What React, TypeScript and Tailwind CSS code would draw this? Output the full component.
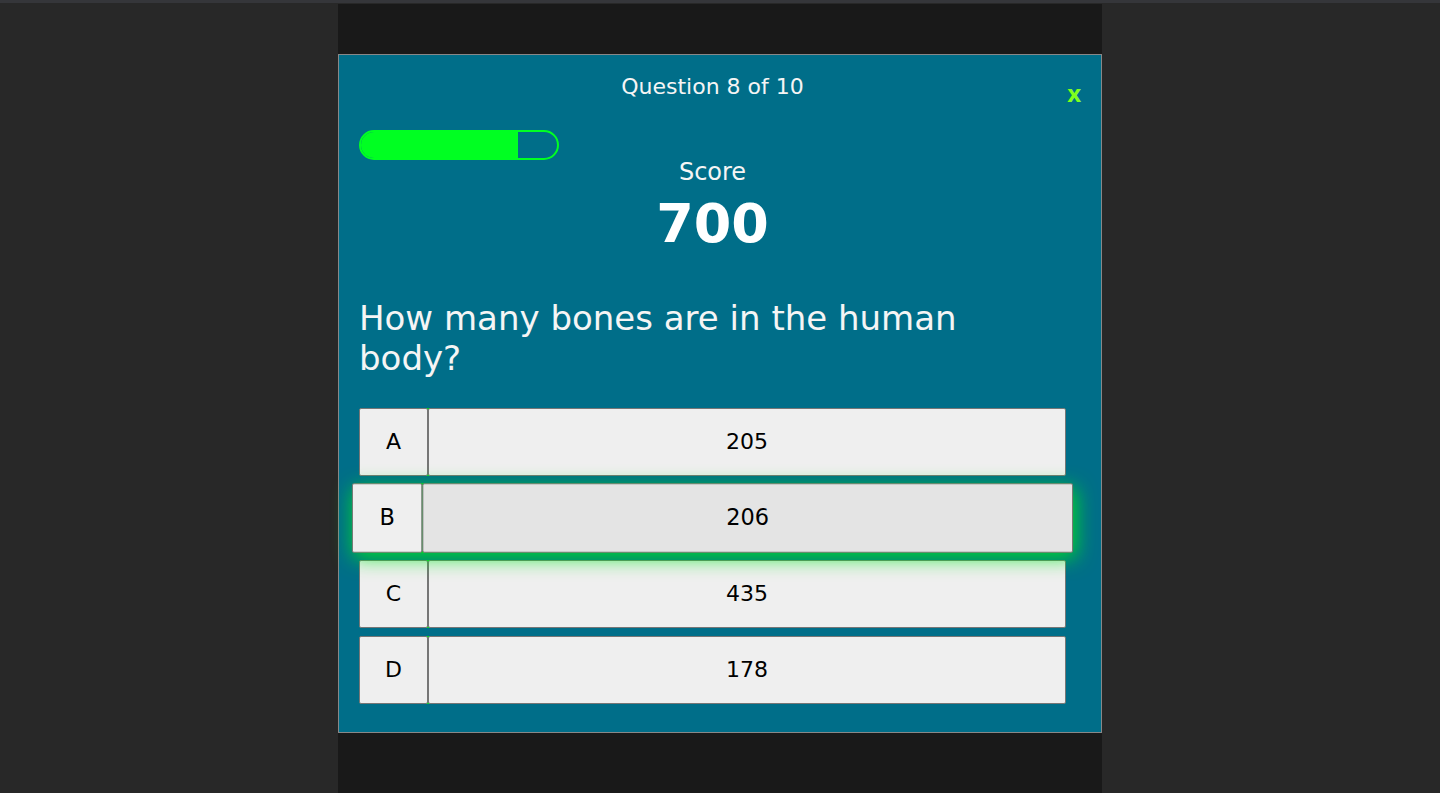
type Choice = { letter: string; text: string };

const choices: Choice[] = [
  { letter: "A", text: "205" },
  { letter: "B", text: "206" },
  { letter: "C", text: "435" },
  { letter: "D", text: "178" },
];

const highlighted = "B";

function ChoiceRow({ letter, text }: Choice) {
  const active = letter === highlighted;
  return (
    <li
      className={
        active
          ? "relative z-10 flex h-17 scale-[1.02] rounded-sm bg-[#00e01e] shadow-[2px_5px_20px_0_rgba(0,235,30,0.85)]"
          : "flex h-17 rounded-sm bg-[#00e01e]"
      }
    >
      <button
        type="button"
        aria-label={`Choice ${letter}`}
        className="w-[69px] shrink-0 rounded-xs border border-[#767676] bg-[#efefef] text-black"
      >
        {letter}
      </button>
      <button
        type="button"
        className={
          active
            ? "flex-1 rounded-xs border border-[#767676] bg-[#e4e4e4] text-black"
            : "flex-1 rounded-xs border border-[#767676] bg-[#efefef] text-black"
        }
      >
        {text}
      </button>
    </li>
  );
}

export default function App() {
  const current = 8;
  const total = 10;
  return (
    <div className="flex min-h-screen flex-col border-t-3 border-[#35363a] bg-[#282828] pt-px font-['DejaVu_Sans',sans-serif]">
      <main className="mx-auto w-[764px] max-w-full flex-1 bg-[#191919] pt-[50px]">
        <section className="relative border border-[#888888] bg-[#006e89] pt-5 pr-[35px] pb-7 pl-5 text-[22px] leading-6 text-[#f5f5f5]">
          <button
            type="button"
            aria-label="Close quiz"
            className="absolute top-5 right-5 font-['Open_Sans',sans-serif] text-[24px] leading-9 font-bold text-[#7fff1f]"
          >
            x
          </button>
          <p className="text-center">
            Question {current} of {total}
          </p>
          <div
            role="progressbar"
            aria-label="Quiz progress"
            aria-valuenow={current}
            aria-valuemax={total}
            className="mt-[31px] h-[30px] w-[200px] overflow-hidden rounded-full border-2 border-[#00ff22]"
          >
            <div
              className="h-full bg-[#00ff22]"
              style={{ width: `${(current / total) * 100}%` }}
            />
          </div>
          <p className="text-center text-[24px]">Score</p>
          <p className="mt-2 text-center text-[54px] leading-16 font-bold text-white">
            700
          </p>
          <h1 className="mt-[42px] pr-8 text-[34px] leading-10">
            How many bones are in the human body?
          </h1>
          <ul className="mt-[30px] flex flex-col gap-2">
            {choices.map((choice) => (
              <ChoiceRow key={choice.letter} {...choice} />
            ))}
          </ul>
        </section>
      </main>
    </div>
  );
}
